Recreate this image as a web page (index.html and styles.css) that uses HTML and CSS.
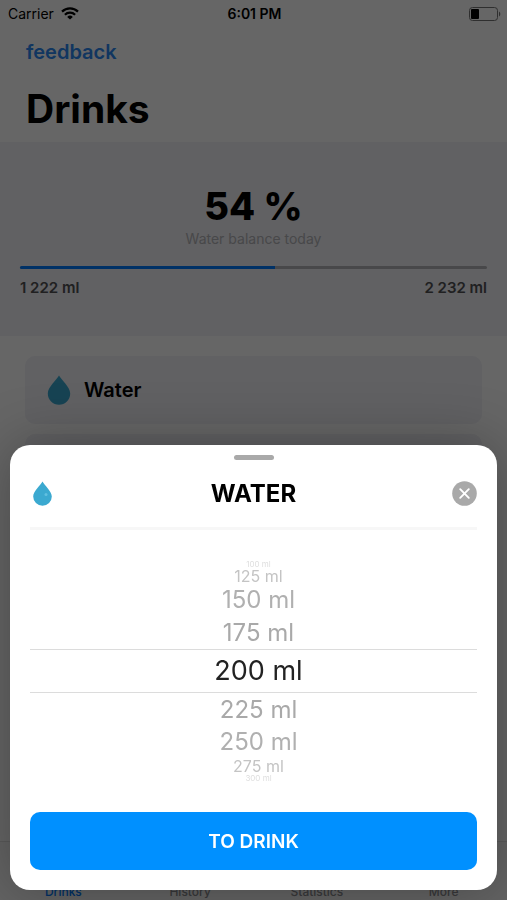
FILE: index.html
```html
<!DOCTYPE html>
<html lang="en">

<head>
    <meta charset="utf-8">
    <meta name="viewport" content="width=device-width, initial-scale=1">
    <title>Drinks</title>
    <link rel="stylesheet" href="styles.css">
</head>

<body>
    <div class="app">
        <div class="status-bar">
            <div class="carrier">
                <span>Carrier</span>
                <svg width="18" height="13" viewBox="0 0 18 13" fill="none" stroke="#000" stroke-width="2.2">
                    <path d="M1 4.6a11.4 11.4 0 0 1 16 0" />
                    <path d="M3.9 7.8a7.2 7.2 0 0 1 10.2 0" />
                    <path d="M9 12.6L6.2 9.9a4 4 0 0 1 5.6 0z" fill="#000" stroke="none" />
                </svg>
            </div>
            <div class="time">6:01 PM</div>
            <svg class="battery" width="32" height="14" viewBox="0 0 32 14">
                <rect x="0.5" y="0.5" width="28" height="13" rx="3" fill="none" stroke="#777" />
                <rect x="2" y="2" width="8" height="10" rx="1" fill="#000" />
                <path d="M30 4.5a3 3 0 0 1 0 5z" fill="#777" />
            </svg>
        </div>

        <header class="header">
            <a href="#" class="feedback">feedback</a>
            <h1>Drinks</h1>
        </header>

        <section class="balance">
            <div class="percent">54 %</div>
            <div class="caption">Water balance today</div>
            <div class="progress">
                <div class="progress-fill" style="width: 54.7%"></div>
            </div>
            <div class="amounts">
                <span>1 222 ml</span>
                <span>2 232 ml</span>
            </div>
        </section>

        <main class="drinks">
            <div class="drink">
                <svg width="24" height="30" viewBox="0 0 24 30">
                    <path d="M12 0.5C9.5 5 0.8 12 0.8 18.6a11.2 11.2 0 0 0 22.4 0C23.2 12 14.5 5 12 0.5z" fill="#3ba9d0" />
                </svg>
                <span>Water</span>
            </div>
            <div class="drink"></div>
        </main>

        <nav class="tab-bar">
            <a href="#" class="active">Drinks</a>
            <a href="#">History</a>
            <a href="#">Statistics</a>
            <a href="#">More</a>
        </nav>
    </div>

    <div class="overlay"></div>

    <div class="sheet" role="dialog" aria-labelledby="sheet-title">
        <div class="grabber"></div>
        <div class="sheet-header">
            <svg width="25" height="25" viewBox="0 0 25 25">
                <path d="M12.5 0.5C10.5 4.5 3.2 10 3.2 15.5a9.3 9.2 0 0 0 18.6 0C21.8 10 14.5 4.5 12.5 0.5z" fill="#3ba9d0" />
                <circle cx="16" cy="13.5" r="1.5" fill="#62c0e0" />
            </svg>
            <h2 id="sheet-title">WATER</h2>
            <button class="close" aria-label="Close">
                <svg width="25" height="25" viewBox="0 0 25 25">
                    <circle cx="12.5" cy="12.5" r="12.3" fill="#a9a9a9" />
                    <path d="M8.2 8.2l8.6 8.6M16.8 8.2l-8.6 8.6" stroke="#fff" stroke-width="1.9" stroke-linecap="round" />
                </svg>
            </button>
        </div>

        <div class="picker">
            <div class="row edge">100 ml</div>
            <div class="row far">125 ml</div>
            <div class="row mid">150 ml</div>
            <div class="row near">175 ml</div>
            <div class="row selected">200 ml</div>
            <div class="row near">225 ml</div>
            <div class="row mid">250 ml</div>
            <div class="row far">275 ml</div>
            <div class="row edge">300 ml</div>
        </div>

        <button class="drink-button">TO DRINK</button>
    </div>
</body>

</html>
```
FILE: styles.css
```css
* {
    box-sizing: border-box;
}

body {
    margin: 0;
    font-family: Inter, "Liberation Sans", sans-serif;
    color: #000;
    background-color: #fff;
}

a {
    text-decoration: none;
}

button {
    font-family: inherit;
    border: none;
    cursor: pointer;
}

.app {
    height: 100vh;
    overflow: hidden;
}

.status-bar {
    display: grid;
    grid-template-columns: 1fr auto 1fr;
    align-items: center;
    height: 27px;
    padding: 0 6px 0 8px;
    font-size: 14px;
}

.carrier {
    display: flex;
    align-items: center;
    gap: 7px;
}

.time {
    font-weight: 600;
}

.battery {
    justify-self: end;
}

.header {
    height: 115px;
    padding: 13px 26px 0;
}

.feedback {
    display: block;
    font-size: 20px;
    line-height: 24px;
    font-weight: 600;
    color: #2b87f0;
}

.header h1 {
    margin: 21px 0 0;
    font-size: 39px;
    line-height: 48px;
    font-weight: 700;
}

.balance {
    height: 194px;
    padding: 40px 20px 0;
    background-color: #f2f2f7;
    text-align: center;
}

.percent {
    font-size: 38px;
    line-height: 48px;
    font-weight: 800;
}

.caption {
    font-size: 14px;
    line-height: 18px;
    color: #b4b4b8;
}

.progress {
    height: 3px;
    margin-top: 18px;
    border-radius: 2px;
    background-color: #b4b4b8;
}

.progress-fill {
    height: 3px;
    border-radius: 2px 0 0 2px;
    background-color: #007aff;
}

.amounts {
    display: flex;
    justify-content: space-between;
    margin-top: 10px;
    font-size: 15px;
    line-height: 18px;
    font-weight: 600;
    color: #505054;
}

.drinks {
    display: flex;
    flex-direction: column;
    gap: 10px;
    padding: 20px 25px;
}

.drink {
    display: flex;
    align-items: center;
    gap: 13px;
    height: 68px;
    padding: 0 22px;
    border-radius: 10px;
    background-color: #f2f2f7;
    font-size: 20px;
    font-weight: 600;
}

.tab-bar {
    position: fixed;
    left: 0;
    right: 0;
    bottom: 0;
    display: flex;
    align-items: flex-end;
    height: 59px;
    padding-bottom: 1px;
    border-top: 1px solid #e4e4e4;
    background-color: #fafafa;
}

.tab-bar a {
    flex: 1;
    font-size: 12px;
    line-height: 14px;
    font-weight: 500;
    text-align: center;
    color: #8e8e93;
}

.tab-bar a.active {
    color: #007aff;
}

.overlay {
    position: fixed;
    inset: 0;
    background-color: rgba(0, 0, 0, 0.6);
}

.sheet {
    position: fixed;
    left: 10px;
    right: 10px;
    bottom: 10px;
    padding: 10px 20px 20px;
    border-radius: 20px;
    background-color: #fff;
    box-shadow: 0 0 60px rgba(0, 0, 0, 0.3);
}

.grabber {
    width: 40px;
    height: 5px;
    margin: 0 auto;
    border-radius: 3px;
    background-color: #a9a9a9;
}

.sheet-header {
    display: flex;
    justify-content: space-between;
    align-items: center;
    height: 70px;
    border-bottom: 3px solid #f7f7f7;
}

.sheet-header h2 {
    margin: 0;
    font-size: 24px;
    line-height: 30px;
    font-weight: 700;
}

.close {
    display: flex;
    padding: 0;
    border-radius: 50%;
    background: none;
}

.picker {
    margin: 30px 0;
    text-align: center;
    color: #a9a9a9;
}

.row {
    padding-left: 10px;
}

.row.edge {
    font-size: 8px;
    line-height: 8px;
    color: #dedede;
}

.row.far {
    font-size: 16px;
    line-height: 16px;
    color: #c4c4c4;
}

.row.mid {
    font-size: 24px;
    line-height: 32px;
    color: #b0b0b0;
}

.row.near {
    font-size: 24px;
    line-height: 33px;
}

.row.selected {
    border-top: 1px solid #dcdcdc;
    border-bottom: 1px solid #dcdcdc;
    font-size: 27px;
    line-height: 42px;
    color: #222;
}

.drink-button {
    display: block;
    width: 100%;
    height: 58px;
    border-radius: 10px;
    background-color: #0090ff;
    color: #fff;
    font-size: 19px;
    font-weight: 600;
}
```
